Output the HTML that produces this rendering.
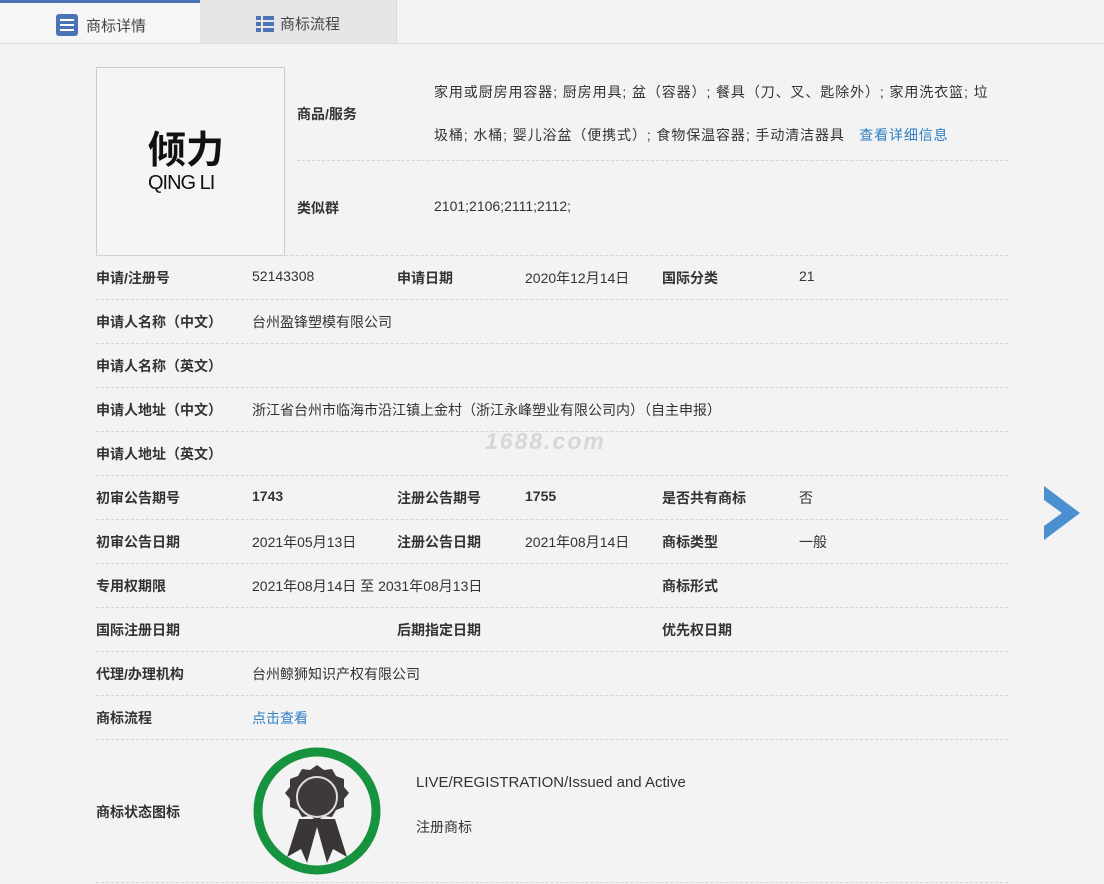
<!DOCTYPE html>
<html><head><meta charset="utf-8"><style>
body{margin:0;width:1104px;height:884px;background:#f3f3f3;font-family:"Liberation Sans","Noto Sans CJK SC",sans-serif;font-size:14px;color:#333;position:relative;overflow:hidden}
.tabs{position:absolute;left:0;top:0;width:1104px;height:43px;border-bottom:1px solid #ddd;background:#f3f3f3}
.t1{position:absolute;left:0;top:0;width:200px;height:43px;border-top:3px solid #4a73b8;box-sizing:border-box;background:#f6f6f6}
.t2{position:absolute;left:200px;top:0;width:197px;height:43px;background:#e6e6e6;border-right:1px solid #d6d6d6;box-sizing:border-box}
.tab-txt{position:absolute;font-size:15px;color:#444}
.a{position:absolute;white-space:nowrap}
.b{font-weight:bold;color:#333}
.line{position:absolute;left:96px;width:912px;border-top:1px dashed #d4d4d4}
.link{color:#2f7fc4}
</style></head><body>
<div class="tabs"><div class="t1"></div><div class="t2"></div></div>
<div class="a" style="left:56px;top:14px;width:22px;height:22px;background:#4a73b8;border-radius:3px"></div>
<div class="a" style="left:60px;top:19px;width:14px;height:2px;background:#fff;box-shadow:0 5px 0 #fff,0 10px 0 #fff"></div>
<div class="tab-txt" style="left:86px;top:15px">商标详情</div>
<div class="a" style="left:256px;top:16px;width:18px;height:16px;background:repeating-linear-gradient(#4a73b8 0 4px,#e6e6e6 4px 6px)"></div>
<div class="a" style="left:261px;top:16px;width:2px;height:16px;background:#e6e6e6"></div>
<div class="tab-txt" style="left:280px;top:13px">商标流程</div>

<div class="a" style="left:96px;top:67px;width:187px;height:187px;border:1px solid #ccc;background:#f5f5f5"></div>
<div class="a" style="left:148px;top:122px;font-size:38px;font-weight:bold;color:#111;font-family:'Noto Sans CJK SC',sans-serif;line-height:50px">倾力</div>
<div class="a" style="left:148px;top:172px;font-size:20px;color:#111;letter-spacing:-1px">QING LI</div>

<div class="a b" style="left:297px;top:104px">商品/服务</div>
<div class="a" style="left:434px;top:71px;line-height:43px;white-space:normal;width:568px;letter-spacing:0.9px">家用或厨房用容器; 厨房用具; 盆（容器）; 餐具（刀、叉、匙除外）; 家用洗衣篮; 垃圾桶; 水桶; 婴儿浴盆（便携式）; 食物保温容器; 手动清洁器具 &nbsp;&nbsp;<span class="link">查看详细信息</span></div>
<div class="line" style="left:297px;width:711px;top:160px"></div>
<div class="a b" style="left:297px;top:198px">类似群</div>
<div class="a" style="left:434px;top:198px">2101;2106;2111;2112;</div>
<div class="line" style="top:255px"></div>

<div class="a b" style="left:96px;top:268px">申请/注册号</div><div class="a" style="left:252px;top:268px">52143308</div>
<div class="a b" style="left:397px;top:268px">申请日期</div><div class="a" style="left:525px;top:268px">2020年12月14日</div>
<div class="a b" style="left:662px;top:268px">国际分类</div><div class="a" style="left:799px;top:268px">21</div>
<div class="line" style="top:299px"></div>
<div class="a b" style="left:96px;top:312px">申请人名称（中文）</div><div class="a" style="left:252px;top:312px">台州盈锋塑模有限公司</div>
<div class="line" style="top:343px"></div>
<div class="a b" style="left:96px;top:356px">申请人名称（英文）</div>
<div class="line" style="top:387px"></div>
<div class="a b" style="left:96px;top:400px">申请人地址（中文）</div><div class="a" style="left:252px;top:400px">浙江省台州市临海市沿江镇上金村（浙江永峰塑业有限公司内）（自主申报）</div>
<div class="line" style="top:431px"></div>
<div class="a" style="left:485px;top:428px;font-size:23px;font-style:italic;font-weight:bold;color:#d6d6d6;letter-spacing:2px">1688.com</div>
<div class="a b" style="left:96px;top:444px">申请人地址（英文）</div>
<div class="line" style="top:475px"></div>
<div class="a b" style="left:96px;top:488px">初审公告期号</div><div class="a b" style="left:252px;top:488px">1743</div>
<div class="a b" style="left:397px;top:488px">注册公告期号</div><div class="a b" style="left:525px;top:488px">1755</div>
<div class="a b" style="left:662px;top:488px">是否共有商标</div><div class="a" style="left:799px;top:488px">否</div>
<div class="line" style="top:519px"></div>
<div class="a b" style="left:96px;top:532px">初审公告日期</div><div class="a" style="left:252px;top:532px">2021年05月13日</div>
<div class="a b" style="left:397px;top:532px">注册公告日期</div><div class="a" style="left:525px;top:532px">2021年08月14日</div>
<div class="a b" style="left:662px;top:532px">商标类型</div><div class="a" style="left:799px;top:532px">一般</div>
<div class="line" style="top:563px"></div>
<div class="a b" style="left:96px;top:576px">专用权期限</div><div class="a" style="left:252px;top:576px">2021年08月14日 至 2031年08月13日</div>
<div class="a b" style="left:662px;top:576px">商标形式</div>
<div class="line" style="top:607px"></div>
<div class="a b" style="left:96px;top:620px">国际注册日期</div>
<div class="a b" style="left:397px;top:620px">后期指定日期</div>
<div class="a b" style="left:662px;top:620px">优先权日期</div>
<div class="line" style="top:651px"></div>
<div class="a b" style="left:96px;top:664px">代理/办理机构</div><div class="a" style="left:252px;top:664px">台州鲸狮知识产权有限公司</div>
<div class="line" style="top:695px"></div>
<div class="a b" style="left:96px;top:708px">商标流程</div><div class="a link" style="left:252px;top:708px">点击查看</div>
<div class="line" style="top:739px"></div>
<div class="a b" style="left:96px;top:802px">商标状态图标</div>
<svg class="a" style="left:251px;top:745px" width="132" height="132" viewBox="0 0 132 132">
<circle cx="66" cy="66" r="59" fill="none" stroke="#17923f" stroke-width="9"/>
<path d="M48 74 L36 112 L50 104 L56 118 L66 82 L76 118 L82 104 L96 112 L84 74Z" fill="#3a3636"/>
<path d="M66 20 l7 5 8-1 4 7 8 3 0 8 5 6-5 6 0 8-8 3-4 7-8-1-7 5-7-5-8 1-4-7-8-3 0-8-5-6 5-6 0-8 8-3 4-7 8 1z" fill="#3e3a3a"/>
<circle cx="66" cy="52" r="20" fill="#3e3a3a" stroke="#ddd" stroke-width="2"/>
</svg>
<div class="a" style="left:416px;top:774px;font-size:15px">LIVE/REGISTRATION/Issued and Active</div>
<div class="a" style="left:416px;top:817px">注册商标</div>
<div class="line" style="top:882px"></div>
<svg class="a" style="left:1044px;top:486px" width="36" height="54" viewBox="0 0 36 54"><path d="M0 0 L36 27 L0 54 L0 40 L18 27 L0 14Z" fill="#4a90d0"/></svg>
</body></html>
